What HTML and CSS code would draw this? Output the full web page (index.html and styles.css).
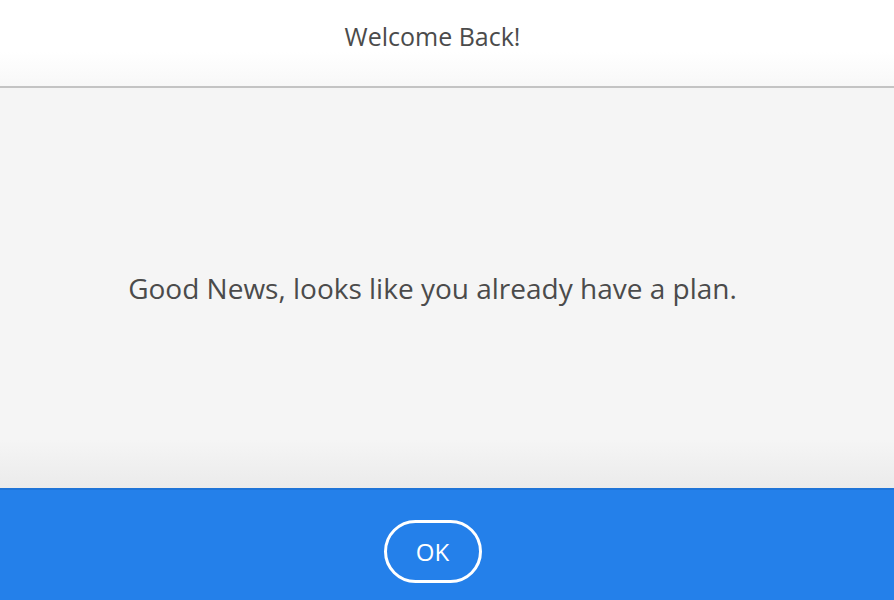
FILE: index.html
```html
<!DOCTYPE html>
<html lang="en">
<head>
  <meta charset="UTF-8" />
  <meta name="viewport" content="width=device-width, initial-scale=1.0"/>
  <title>Welcome Back</title>
  <link rel="stylesheet" href="styles.css">
</head>
<body>
  <div class="dialog">
    <header class="dialog-header">
      <h1>Welcome Back!</h1>
    </header>

    <main class="dialog-body">
      <p>Good News, looks like you already have a plan.</p>
    </main>

    <footer class="dialog-footer">
      <button class="ok-button">OK</button>
    </footer>
  </div>
</body>
</html>
```

FILE: styles.css
```css
html, body {
  margin: 0;
  height: 100%;
}
body {
  font-family: "Open Sans", "Noto Sans", Arial, sans-serif;
  color: #4b4b4b;
  background: #f4f4f4;
}
.dialog {
  display: flex;
  flex-direction: column;
  height: 600px;
}
/* content sits a little left of the window centre */
.dialog-header,
.dialog-body,
.dialog-footer {
  padding-right: 29px;
  flex-shrink: 0;
}
.dialog-header {
  height: 86px;
  display: flex;
  justify-content: center;
  align-items: center;
  background: linear-gradient(to bottom, #ffffff 60%, #f8f8f8 100%);
  border-bottom: 2px solid #c4c4c4;
}
.dialog-header h1 {
  margin: 0 0 14px;
  font-size: 25px;
  font-weight: 400;
  color: #4b4b4b;
}
.dialog-body {
  height: 400px;
  display: flex;
  justify-content: center;
  align-items: center;
  background: linear-gradient(to bottom, #f5f5f5 88%, #ebebeb 100%);
}
.dialog-body p {
  margin: 0;
  font-size: 28px;
  color: #4b4b4b;
}
.dialog-footer {
  flex: 1;
  display: flex;
  justify-content: center;
  align-items: flex-start;
  padding-top: 30px;
  background: #2480ea;
  border-top: 2px solid #1f74d8;
}
.ok-button {
  width: 98px;
  height: 63px;
  background: transparent;
  border: 3px solid #fff;
  border-radius: 32px;
  color: #fff;
  font-family: inherit;
  font-size: 24px;
  cursor: pointer;
}
```
